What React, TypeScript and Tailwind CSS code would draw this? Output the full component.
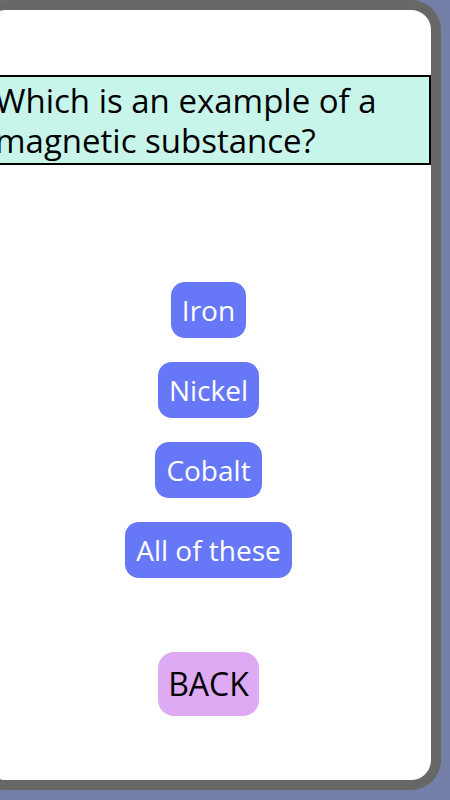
import React from "react";

export default function App() {
  const opts = ["Iron", "Nickel", "Cobalt", "All of these"];
  return (
    <div
      className="w-[450px] h-[800px] overflow-hidden bg-[#7480a8]"
      style={{ fontFamily: '"Open Sans", "Noto Sans", sans-serif' }}
    >
      <div className="ml-[-24px] w-[465px] h-[790px] border-[10px] border-[#676767] rounded-[30px] bg-white flex flex-col items-center">
        <div className="mt-[65px] w-full border-2 border-black bg-[#c8f5ea] pl-[7px] pr-2 pt-[4px] pb-[2px] text-[33px] leading-[40px] text-black">
          Which is an example of a magnetic substance?
        </div>
        <div className="mt-[117px] flex flex-col items-center gap-[24px]">
          {opts.map((o) => (
            <button
              key={o}
              className="h-[56px] px-[11px] rounded-[14px] bg-[#6677f7] text-white text-[28px] leading-none"
            >
              {o}
            </button>
          ))}
        </div>
        <button className="mt-[74px] h-[64px] px-[10px] rounded-[16px] bg-[#ddaaf3] text-black text-[32px] leading-none">
          BACK
        </button>
      </div>
    </div>
  );
}
